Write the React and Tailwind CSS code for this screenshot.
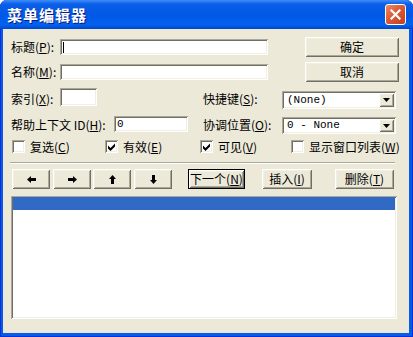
import React from "react";

const raised =
  "shadow-[inset_1px_1px_0_#ffffff,inset_-1px_-1px_0_#716F64,inset_2px_2px_0_#F1EFE2,inset_-2px_-2px_0_#ACA899]";
const sunken =
  "shadow-[inset_1px_1px_0_#ACA899,inset_-1px_-1px_0_#ffffff,inset_2px_2px_0_#716F64,inset_-2px_-2px_0_#F1EFE2]";

function K({ k }) {
  return (
    <>
      (<span className="underline underline-offset-[1px]">{k}</span>)
    </>
  );
}

function Btn({ children, w, className = "" }) {
  return (
    <div
      className={`${w} h-[20px] bg-[#ECE9D8] ${raised} flex items-center justify-center whitespace-nowrap ${className}`}
    >
      {children}
    </div>
  );
}

function Check({ checked }) {
  return (
    <div
      className={`w-[13px] h-[13px] shrink-0 bg-white ${sunken} flex items-center justify-center`}
    >
      {checked && (
        <svg width="7" height="8" viewBox="0 0 7 8">
          <path d="M0 2.5 L2.5 5 L7 0.5 L7 3.5 L2.5 8 L0 5.5 Z" fill="#000" />
        </svg>
      )}
    </div>
  );
}

function Combo({ text, h, className = "" }) {
  return (
    <div
      className={`w-[114px] ${h} bg-white ${sunken} flex items-stretch p-[2px] ${className}`}
    >
      <span className="flex-1 flex items-center pl-[3px] font-['Liberation_Mono',monospace] text-[11px] leading-none">
        {text}
      </span>
      <div
        className={`w-[15px] bg-[#ECE9D8] ${raised} flex items-center justify-center`}
      >
        <svg width="7" height="4" viewBox="0 0 7 4">
          <path d="M0 0 H7 L3.5 4 Z" fill="#000" />
        </svg>
      </div>
    </div>
  );
}

function Arrow({ dir }) {
  if (dir === "left" || dir === "right") {
    const d =
      dir === "left"
        ? "M0 3.5 L4 0 L4 2 L9 2 L9 5 L4 5 L4 7 Z"
        : "M9 3.5 L5 0 L5 2 L0 2 L0 5 L5 5 L5 7 Z";
    return (
      <svg width="9" height="7" viewBox="0 0 9 7">
        <path d={d} fill="#000" />
      </svg>
    );
  }
  const d =
    dir === "up"
      ? "M3.5 0 L7 4 L5 4 L5 9 L2 9 L2 4 L0 4 Z"
      : "M3.5 9 L7 5 L5 5 L5 0 L2 0 L2 5 L0 5 Z";
  return (
    <svg width="7" height="9" viewBox="0 0 7 9">
      <path d={d} fill="#000" />
    </svg>
  );
}

export default function App() {
  return (
    <div className="w-[413px] h-[337px] bg-white font-['Noto_Sans_CJK_SC',sans-serif]">
      <div className="w-full h-full flex flex-col rounded-t-[7px] overflow-hidden bg-[#0A5AE9] shadow-[inset_1px_0_0_#0831D9,inset_-1px_0_0_#0831D9,inset_0_-1px_0_#0831D9]">
        {/* title bar */}
        <div className="h-[29px] shrink-0 flex items-center justify-between bg-[linear-gradient(to_bottom,#3E8DF8_0%,#0B5FE8_14%,#0058E6_55%,#0262F0_85%,#0048CC_100%)]">
          <span className="ml-[7px] text-white font-bold text-[15px] tracking-[1px] leading-none [text-shadow:1px_1px_0_#0A1883]">
            菜单编辑器
          </span>
          <div className="mr-[7px] w-[21px] h-[21px] rounded-[3px] border border-white bg-[linear-gradient(135deg,#EE8A66_0%,#DC5A36_45%,#C4401C_100%)] flex items-center justify-center">
            <svg width="11" height="11" viewBox="0 0 11 11">
              <path
                d="M1.5 1.5 L9.5 9.5 M9.5 1.5 L1.5 9.5"
                stroke="#fff"
                strokeWidth="2.2"
                strokeLinecap="square"
              />
            </svg>
          </div>
        </div>

        {/* client */}
        <div className="flex-1 ml-[3px] mr-[4px] mb-[4px] bg-[#ECE9D8] flex flex-col text-[12px] leading-[14px] text-black">
          {/* row A */}
          <div className="mt-[8px] h-[20px] flex items-center">
            <div className="ml-[8px] w-[49px] whitespace-nowrap">
              标题<K k="P" />:
            </div>
            <div className={`w-[208px] h-[16px] bg-white ${sunken} flex items-center pl-[3px]`}>
              <div className="w-[1px] h-[11px] bg-black" />
            </div>
            <Btn w="w-[94px]" className="ml-[37px]">
              确定
            </Btn>
          </div>

          {/* row B */}
          <div className="mt-[5px] h-[20px] flex items-center">
            <div className="ml-[8px] w-[49px] whitespace-nowrap">
              名称<K k="M" />:
            </div>
            <div className={`w-[208px] h-[16px] bg-white ${sunken}`} />
            <Btn w="w-[94px]" className="ml-[37px]">
              取消
            </Btn>
          </div>

          {/* row C */}
          <div className="mt-[6px] h-[21px] flex items-start">
            <div className="ml-[8px] w-[49px] self-stretch flex items-center whitespace-nowrap">
              索引<K k="X" />:
            </div>
            <div className={`w-[37px] h-[18px] bg-white ${sunken}`} />
            <div className="ml-[106px] w-[79px] self-stretch flex items-center whitespace-nowrap">
              快捷键<K k="S" />:
            </div>
            <Combo text="(None)" h="h-[18px]" className="mt-[3px]" />
          </div>

          {/* row D */}
          <div className="mt-[7px] h-[18px] flex items-start">
            <div className="ml-[8px] w-[103px] self-stretch flex items-center whitespace-nowrap">
              帮助上下文 ID<K k="H" />:
            </div>
            <div className={`w-[74px] h-[16px] bg-white ${sunken} flex items-center pl-[3px] font-['Liberation_Mono',monospace] text-[11px] leading-none`}>
              0
            </div>
            <div className="ml-[15px] w-[79px] self-stretch flex items-center whitespace-nowrap">
              协调位置<K k="O" />:
            </div>
            <Combo text="0 - None" h="h-[17px]" className="mt-[1px]" />
          </div>

          {/* row E */}
          <div className="mt-[6px] h-[13px] flex items-center">
            <div className="ml-[9px] w-[93px] flex items-center whitespace-nowrap">
              <Check />
              <span className="ml-[5px]">
                复选<K k="C" />
              </span>
            </div>
            <div className="w-[95px] flex items-center whitespace-nowrap">
              <Check checked />
              <span className="ml-[5px]">
                有效<K k="E" />
              </span>
            </div>
            <div className="w-[91px] flex items-center whitespace-nowrap">
              <Check checked />
              <span className="ml-[5px]">
                可见<K k="V" />
              </span>
            </div>
            <div className="flex items-center whitespace-nowrap">
              <Check />
              <span className="ml-[5px]">
                显示窗口列表<K k="W" />
              </span>
            </div>
          </div>

          {/* separator */}
          <div className="mt-[9px] ml-[7px] w-[385px] h-[2px] border-t border-t-[#ACA899] border-b border-b-white" />

          {/* row F */}
          <div className="mt-[5px] h-[20px] flex items-center">
            <Btn w="w-[38px]" className="ml-[9px]">
              <Arrow dir="left" />
            </Btn>
            <Btn w="w-[38px]" className="ml-[3px]">
              <Arrow dir="right" />
            </Btn>
            <Btn w="w-[38px]" className="ml-[2px]">
              <Arrow dir="up" />
            </Btn>
            <Btn w="w-[38px]" className="ml-[3px]">
              <Arrow dir="down" />
            </Btn>
            <div className="ml-[16px] w-[57px] h-[20px] border border-black flex">
              <div className={`flex-1 bg-[#ECE9D8] ${raised} flex items-center justify-center whitespace-nowrap`}>
                下一个<K k="N" />
              </div>
            </div>
            <Btn w="w-[50px]" className="ml-[17px]">
              插入<K k="I" />
            </Btn>
            <Btn w="w-[59px]" className="ml-[23px]">
              删除<K k="T" />
            </Btn>
          </div>

          {/* list */}
          <div className={`mt-[7px] ml-[8px] w-[386px] h-[123px] bg-white ${sunken} pt-[1px] px-[2px]`}>
            <div className="h-[13px] bg-[#316AC5]" />
          </div>
        </div>
      </div>
    </div>
  );
}
